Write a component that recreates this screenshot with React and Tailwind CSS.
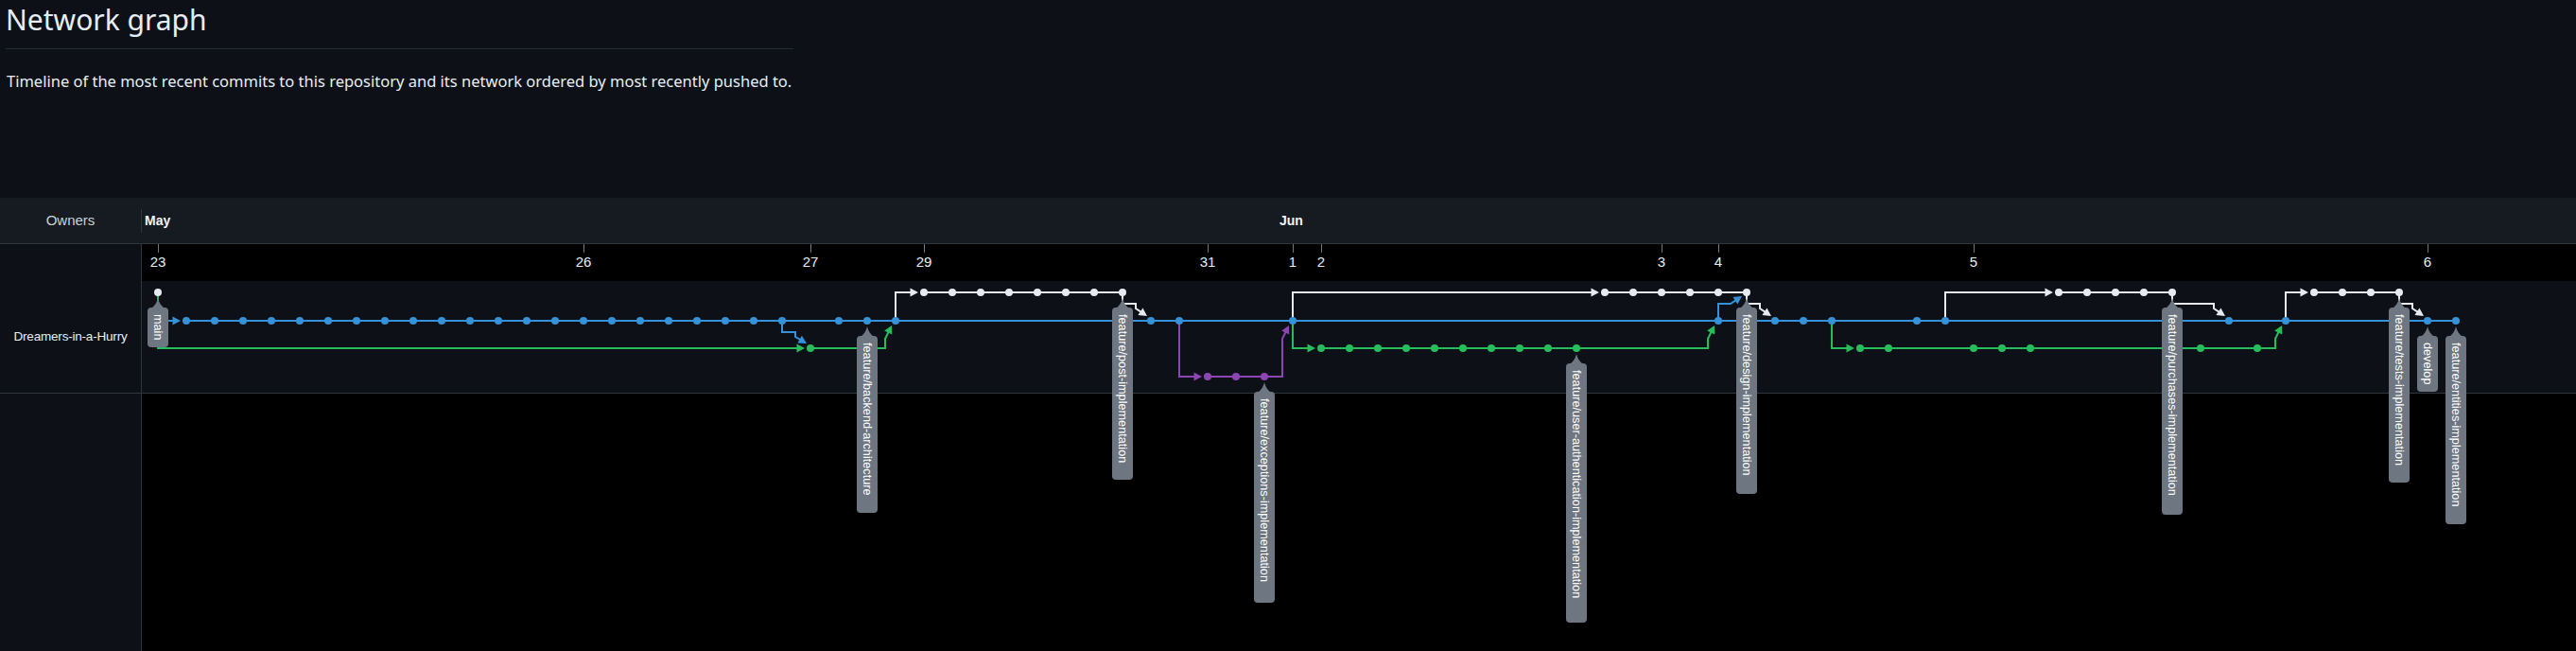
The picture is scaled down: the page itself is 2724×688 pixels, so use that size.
import React from "react";

const X = (c) => 167 + 30 * c;
const Y = [309, 339, 368, 398];
const COLORS = ["#e6e9ee", "#3592d9", "#27bd5d", "#8e45b4"];
const range = (a, b) => Array.from({ length: b - a + 1 }, (_, i) => a + i);

const commits = [
  [0, ...range(27, 34), ...range(51, 56), ...range(67, 71), ...range(76, 79)],
  [...range(1, 22), 24, 25, 26, 35, 36, 40, 55, 57, 58, 59, 62, 63, 73, 75, 80, 81],
  [23, ...range(41, 50), 60, 61, 64, 65, 66, 72, 74],
  [37, 38, 39],
];

// straight runs along a row
const runs = [
  [0, 27, 34], [0, 51, 56], [0, 67, 71], [0, 76, 79],
  [1, 1, 81],
  [2, 41, 50], [2, 60, 74],
  [3, 37, 39],
];

const branches = [
  [0, 0, 1, 1], [0, 0, 23, 2], [26, 1, 27, 0], [40, 1, 51, 0], [40, 1, 41, 2],
  [36, 1, 37, 3], [59, 1, 60, 2], [63, 1, 67, 0], [75, 1, 76, 0],
];
const mergesDown = [[22, 1, 23, 2], [34, 0, 35, 1], [56, 0, 57, 1], [71, 0, 73, 1], [79, 0, 80, 1]];
const mergesUp = [[23, 2, 26, 1], [39, 3, 40, 1], [50, 2, 55, 1], [74, 2, 75, 1]];
const mergesUpShort = [[55, 1, 56, 0]];

const dates = [[0, "23"], [15, "26"], [23, "27"], [27, "29"], [37, "31"], [40, "1"], [41, "2"], [53, "3"], [55, "4"], [64, "5"], [80, "6"]];
const months = [[0, "May"], [40, "Jun"]];

const labels = [
  [0, 0, "main", 42],
  [25, 1, "feature/backend-architecture", 187],
  [34, 0, "feature/post-implementation", 182],
  [39, 3, "feature/exceptions-implementation", 223],
  [50, 2, "feature/user-authentication-implementation", 274],
  [56, 0, "feature/design-implementation", 197],
  [71, 0, "feature/purchases-implementation", 219],
  [79, 0, "feature/tests-implementation", 185],
  [80, 1, "develop", 59],
  [81, 1, "feature/entities-implementation", 199],
];

function arrow(tx, ty, fx, fy, L = 8.5, w = 4.5) {
  const dx = tx - fx, dy = ty - fy;
  const len = Math.hypot(dx, dy);
  const ux = dx / len, uy = dy / len;
  const bx = tx - ux * L, by = ty - uy * L;
  return {
    pts: `${tx},${ty} ${bx - uy * w},${by + ux * w} ${bx + uy * w},${by - ux * w}`,
    end: [bx + ux * 2, by + uy * 2],
  };
}

function buildEdges() {
  const out = [];
  branches.forEach(([pc, pr, cc, cr]) => {
    const px = X(pc), py = Y[pr], cx = X(cc), cy = Y[cr];
    const a = arrow(cx - 6, cy, cx - 20, cy);
    out.push({ color: COLORS[cr], d: `M${px} ${py}V${cy}H${a.end[0]}`, a: a.pts });
  });
  mergesDown.forEach(([pc, pr, cc, cr]) => {
    const px = X(pc), py = Y[pr], cx = X(cc), cy = Y[cr];
    const a = arrow(cx - 4, cy - 5, cx - 16, py + 17);
    out.push({ color: COLORS[pr], d: `M${px} ${py}V${py + 12}H${cx - 16}V${py + 17}L${a.end[0]} ${a.end[1]}`, a: a.pts });
  });
  mergesUp.forEach(([pc, pr, cc, cr]) => {
    const px = X(pc), py = Y[pr], cx = X(cc), cy = Y[cr];
    const a = arrow(cx - 4, cy + 5, cx - 11, cy + 19);
    out.push({ color: COLORS[pr], d: `M${px} ${py}H${cx - 11}V${cy + 19}L${a.end[0]} ${a.end[1]}`, a: a.pts });
  });
  mergesUpShort.forEach(([pc, pr, cc, cr]) => {
    const px = X(pc), py = Y[pr], cx = X(cc), cy = Y[cr];
    const a = arrow(cx - 5, cy + 4, px + 13, py - 18);
    out.push({ color: COLORS[pr], d: `M${px} ${py}V${py - 18}H${px + 13}L${a.end[0]} ${a.end[1]}`, a: a.pts });
  });
  return out;
}

const Graph = () => {
  const edges = buildEdges();
  return (
    <svg
      className="absolute left-[150px] top-[209px] pointer-events-none"
      width="2574"
      height="479"
      viewBox="150 209 2574 479"
      fontFamily="'Liberation Sans', Arial, sans-serif"
    >
      {months.map(([c, t]) => (
        <text key={t} x={X(c) - 14} y={238} fontSize="14" fontWeight="700" fill="#f0f3f6">
          {t}
        </text>
      ))}
      {dates.map(([c, t]) => (
        <g key={t}>
          <line x1={X(c) + 0.5} x2={X(c) + 0.5} y1={258} y2={267} stroke="#6e7681" strokeWidth="1" />
          <text x={X(c)} y={282} fontSize="15" textAnchor="middle" fill="#e6edf3">
            {t}
          </text>
        </g>
      ))}

      {runs.map(([r, a, b], i) => (
        <line key={i} x1={X(a)} x2={X(b)} y1={Y[r]} y2={Y[r]} stroke={COLORS[r]} strokeWidth="2" />
      ))}
      {edges.map((e, i) => (
        <g key={i}>
          <path d={e.d} fill="none" stroke={e.color} strokeWidth="2" />
          <polygon points={e.a} fill={e.color} />
        </g>
      ))}
      {commits.map((cols, r) =>
        cols.map((c) => <circle key={`${r}-${c}`} cx={X(c)} cy={Y[r]} r="4" fill={COLORS[r]} />)
      )}

      {labels.map(([c, r, t, h]) => {
        const x = X(c);
        const tip = Y[r] + 6;
        const top = Y[r] + 16;
        return (
          <g key={t}>
            <path
              d={`M${x - 7} ${top + 1}C${x - 3} ${top - 2} ${x - 1} ${tip + 4} ${x} ${tip}C${x + 1} ${tip + 4} ${x + 3} ${top - 2} ${x + 7} ${top + 1}Z`}
              fill="#6e7681"
            />
            <rect x={x - 11} y={top} width="22" height={h} rx="4" fill="#6e7681" />
            <text
              transform={`translate(${x} ${top + 7}) rotate(90)`}
              fontSize="12.7"
              fill="#ffffff"
              dominantBaseline="central"
            >
              {t}
            </text>
          </g>
        );
      })}
    </svg>
  );
};

export default function App() {
  return (
    <div className="relative w-[2724px] h-[688px] overflow-hidden bg-[#0d1117] font-['Noto_Sans',sans-serif] text-[#e6edf3]">
      {/* heading */}
      <div className="h-[209px]">
        <h2 className="pl-[6px] text-[30px] leading-[42px] font-normal">Network graph</h2>
        <div className="ml-[6px] mt-[9px] w-[833px] h-px bg-[#262c34]" />
        <p className="pl-[7px] mt-[22px] text-[16.5px] leading-[24px]">
          Timeline of the most recent commits to this repository and its network ordered by most recently pushed to.
        </p>
      </div>

      {/* owners / months header */}
      <div className="flex h-[49px] bg-[#161b22] border-b border-[#30363d] font-['Liberation_Sans',Arial,sans-serif]">
        <div className="w-[150px] flex items-center">
          <span className="flex-1 text-center text-[15px] text-[#c9d1d9]">Owners</span>
          <div className="w-px h-[25px] bg-[#30363d]" />
        </div>
      </div>

      {/* body */}
      <div className="flex h-[430px]">
        <div className="w-[150px] border-r border-[#30363d] bg-[#0d1117]">
          <div className="h-[158px] pt-[39px] border-b border-[#30363d]">
            <div className="h-[118px] flex items-center justify-center text-[13.5px] text-[#e6edf3] font-['Liberation_Sans',Arial,sans-serif] tracking-[-0.2px]">
              Dreamers-in-a-Hurry
            </div>
          </div>
        </div>
        <div className="flex-1 bg-black">
          <div className="h-[39px] bg-black" />
          <div className="h-[119px] bg-[#0d1117] border-b border-[#30363d]" />
        </div>
      </div>

      <Graph />
    </div>
  );
}
